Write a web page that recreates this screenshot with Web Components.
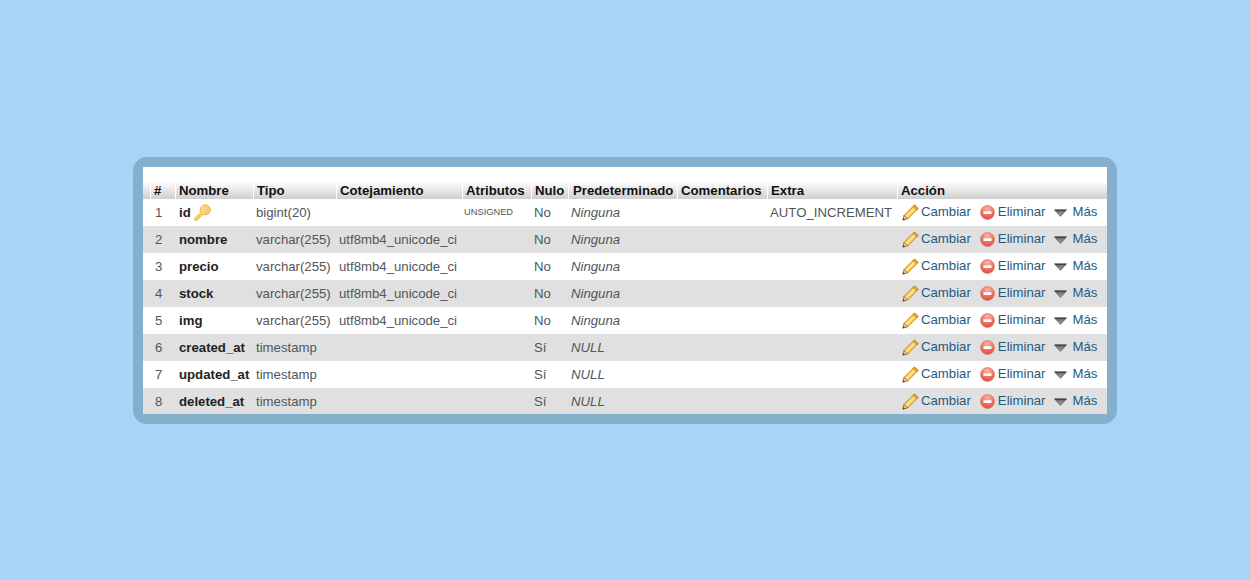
<!DOCTYPE html>
<html lang="es">
<head>
<meta charset="utf-8">
<title>Estructura de tabla</title>
<style>
    html, body{
        margin: 0;
        height: 100%;
        background: #a8d4f8;
    }
    body{
        display: flex;
        justify-content: center;
        font-family: "Liberation Sans", Arial, sans-serif;
        font-size: 13.2px;
    }
</style>
</head>
<body>
<table-panel id="panel"></table-panel>

<script>
const COLUMNS = '32px 78px 83px 126px 69px 37px 109px 90px 130px 210px';

const FIELDS = [
    ['1', 'id', 'bigint(20)', '', 'UNSIGNED', 'No', 'Ninguna', 'AUTO_INCREMENT', true],
    ['2', 'nombre', 'varchar(255)', 'utf8mb4_unicode_ci', '', 'No', 'Ninguna', ''],
    ['3', 'precio', 'varchar(255)', 'utf8mb4_unicode_ci', '', 'No', 'Ninguna', ''],
    ['4', 'stock', 'varchar(255)', 'utf8mb4_unicode_ci', '', 'No', 'Ninguna', ''],
    ['5', 'img', 'varchar(255)', 'utf8mb4_unicode_ci', '', 'No', 'Ninguna', ''],
    ['6', 'created_at', 'timestamp', '', '', 'Sí', 'NULL', ''],
    ['7', 'updated_at', 'timestamp', '', '', 'Sí', 'NULL', ''],
    ['8', 'deleted_at', 'timestamp', '', '', 'Sí', 'NULL', '']
];

const ICONS = {
    key: `<svg width="17" height="17" viewBox="0 0 17 17">
        <defs><linearGradient id="k" x1="0" y1="0" x2="1" y2="1"><stop offset="0" stop-color="#ffeb9c"/><stop offset=".6" stop-color="#fbd061"/><stop offset="1" stop-color="#efae35"/></linearGradient></defs>
        <path d="M11 .8c3 0 5.400 2.200 5.400 5 0 2.700-2.300 5-5.200 5-.8 0-1.400-.1-2-.4L7.300 12.200H5.900v1.600H4.300v1.400l-1.400 1.200H1.100L.6 14.200l6-5.600c-.3-.6-.4-1.300-.4-2 0-3.200 2-5.800 4.800-5.800z" fill="url(#k)" stroke="#e3a83a" stroke-width=".8" stroke-linejoin="round"/>
        <ellipse cx="11.800" cy="4.400" rx="1.500" ry="1.100" fill="#fff4c4" stroke="#e3a83a" stroke-width=".5"/>
    </svg>`,
    pencil: `<svg width="17" height="17" viewBox="0 0 17 17">
        <path d="M12.500 .9l3.600 3.600L5.600 15 2 11.400z" fill="#f5c344" stroke="#c4841c" stroke-width=".9" stroke-linejoin="round"/>
        <path d="M13 2.300l1.700 1.700L4.800 13.900l-1.700-1.700z" fill="#fde28a"/>
        <path d="M12.500 .9l3.600 3.600-1.500 1.500L11 2.400z" fill="#eda13c" stroke="#c4841c" stroke-width=".7" stroke-linejoin="round"/>
        <path d="M2 11.400L5.600 15 .8 16.200z" fill="#eccd9c" stroke="#8a5a20" stroke-width=".7" stroke-linejoin="round"/>
        <path d="M.8 16.200l.6-2.300 1.700 1.700z" fill="#4d2d0c"/>
    </svg>`,
    remove: `<svg width="15" height="15" viewBox="0 0 15 15">
        <defs><radialGradient id="r" cx=".5" cy=".2" r=".9"><stop offset="0" stop-color="#fbb4a6"/><stop offset=".6" stop-color="#ee6a5a"/><stop offset="1" stop-color="#dc4436"/></radialGradient></defs>
        <circle cx="7.500" cy="7.500" r="6.900" fill="url(#r)" stroke="#e0685c" stroke-width=".7"/>
        <rect x="3.500" y="6.200" width="8" height="2.800" rx=".5" fill="#fff"/>
    </svg>`,
    more: `<svg width="13" height="8" viewBox="0 0 13 8">
        <defs><linearGradient id="m" x1="0" y1="0" x2="0" y2="1"><stop offset="0" stop-color="#222"/><stop offset=".25" stop-color="#777"/><stop offset="1" stop-color="#aaa"/></linearGradient></defs>
        <path d="M.4 .8h12.200L6.500 7.400z" fill="url(#m)" stroke="#222" stroke-width=".5" stroke-linejoin="round"/>
    </svg>`
};

const headcelltpl = document.createElement('template');
headcelltpl.innerHTML = `
    <style>
        :host{
            display: block;
            padding: 0 0 0 3px;
            border-left: 1px solid #fff;
            font-weight: bold;
            color: #111;
            line-height: 19px;
            height: 18px;
            white-space: nowrap;
            background: linear-gradient(#fff, #cfcfcf);
        }
    </style>
    <slot></slot>`;

class table_headCell extends HTMLElement{
    constructor(){
        super();
        this.attachShadow({mode: 'open'});
        this.shadowRoot.appendChild(headcelltpl.content.cloneNode(true));
    }
}
customElements.define('table-head-cell', table_headCell);

const celltpl = document.createElement('template');
celltpl.innerHTML = `
    <style>
        :host{
            display: flex;
            align-items: center;
            padding-left: 3px;
            padding-bottom: 1px;
            color: #50565a;
            white-space: nowrap;
        }
        :host([kind="num"]){
            padding-left: 12px;
        }
        :host([kind="name"]){
            font-weight: bold;
            color: #222;
            padding-left: 4px;
            gap: 3px;
        }
        :host([kind="attr"]){
            font-size: 9.3px;
            padding-left: 2px;
            padding-bottom: 2px;
        }
        :host([kind="def"]){
            font-style: italic;
        }
    </style>
    <slot></slot>`;

class table_cell extends HTMLElement{
    constructor(){
        super();
        this.attachShadow({mode: 'open'});
        this.shadowRoot.appendChild(celltpl.content.cloneNode(true));
    }
}
customElements.define('table-cell', table_cell);

const actiontpl = document.createElement('template');
actiontpl.innerHTML = `
    <style>
        :host{
            display: inline-flex;
            align-items: center;
            color: #235a81;
        }
        #icon{
            display: flex;
            position: relative;
            top: 1.500px;
        }
    </style>
    <span id="icon"></span><span id="label"><slot></slot></span>`;

class table_action extends HTMLElement{
    constructor(){
        super();
        this.attachShadow({mode: 'open'});
        this.shadowRoot.appendChild(actiontpl.content.cloneNode(true));
    }

    connectedCallback(){
        this.shadowRoot.querySelector('#icon').innerHTML = ICONS[this.getAttribute('icon')];
        this.shadowRoot.querySelector('#icon').style.marginRight = this.getAttribute('gap') + 'px';
        this.style.marginRight = this.getAttribute('after') + 'px';
    }
}
customElements.define('table-action', table_action);

const rowtpl = document.createElement('template');
rowtpl.innerHTML = `
    <style>
        :host{
            display: grid;
            grid-template-columns: var(--columns);
            height: 27px;
            background: #fff;
        }
        :host([shade]){
            background: #e0e0e0;
        }
        #actions{
            display: flex;
            align-items: center;
            padding-left: 5px;
            padding-bottom: 3px;
        }
    </style>
    <table-cell kind="num" id="num"></table-cell>
    <table-cell kind="name" id="name"></table-cell>
    <table-cell id="type"></table-cell>
    <table-cell id="collation"></table-cell>
    <table-cell kind="attr" id="attr"></table-cell>
    <table-cell id="nullable"></table-cell>
    <table-cell kind="def" id="def"></table-cell>
    <table-cell id="comment"></table-cell>
    <table-cell id="extra"></table-cell>
    <div id="actions">
        <table-action icon="pencil" gap="2" after="9">Cambiar</table-action>
        <table-action icon="remove" gap="3" after="9">Eliminar</table-action>
        <table-action icon="more" gap="5" after="0">Más</table-action>
    </div>`;

class table_row extends HTMLElement{
    constructor(){
        super();
        this.attachShadow({mode: 'open'});
        this.shadowRoot.appendChild(rowtpl.content.cloneNode(true));
    }

    set field(f){
        const q = (id) => this.shadowRoot.querySelector('#' + id);
        q('num').textContent = f[0];
        q('name').textContent = f[1];
        q('type').textContent = f[2];
        q('collation').textContent = f[3];
        q('attr').textContent = f[4];
        q('nullable').textContent = f[5];
        q('def').textContent = f[6];
        q('extra').textContent = f[7];
        if (f[8]) q('name').insertAdjacentHTML('beforeend', ICONS.key);
    }
}
customElements.define('table-row', table_row);

const paneltpl = document.createElement('template');
paneltpl.innerHTML = `
    <style>
        :host{
            display: block;
            width: 964px;
            margin-top: 157px;
            align-self: flex-start;
            padding: 10px;
            border-radius: 14px;
            background: #85b0cd;
            --columns: ${COLUMNS};
        }
        #sheet{
            height: 233px;
            overflow: hidden;
            background: #fff;
            padding-top: 14px;
        }
        #head{
            display: grid;
            grid-template-columns: var(--columns);
            background: linear-gradient(#fff, #cfcfcf);
        }
        #head table-head-cell:first-child{
            margin-left: 7px;
            padding-left: 3px;
        }
        #head table-head-cell:nth-child(7){
            padding-left: 4px;
        }
    </style>
    <div id="sheet">
        <div id="head">
            <table-head-cell>#</table-head-cell>
            <table-head-cell>Nombre</table-head-cell>
            <table-head-cell>Tipo</table-head-cell>
            <table-head-cell>Cotejamiento</table-head-cell>
            <table-head-cell>Atributos</table-head-cell>
            <table-head-cell>Nulo</table-head-cell>
            <table-head-cell>Predeterminado</table-head-cell>
            <table-head-cell>Comentarios</table-head-cell>
            <table-head-cell>Extra</table-head-cell>
            <table-head-cell>Acción</table-head-cell>
        </div>
        <div id="rows"></div>
    </div>`;

class table_panel extends HTMLElement{
    constructor(){
        super();
        this.attachShadow({mode: 'open'});
        this.shadowRoot.appendChild(paneltpl.content.cloneNode(true));
        const rows = this.shadowRoot.querySelector('#rows');
        FIELDS.forEach((f, i) => {
            const row = document.createElement('table-row');
            if (i % 2) row.setAttribute('shade', '');
            row.field = f;
            rows.appendChild(row);
        });
    }
}
customElements.define('table-panel', table_panel);
</script>
</body>
</html>
